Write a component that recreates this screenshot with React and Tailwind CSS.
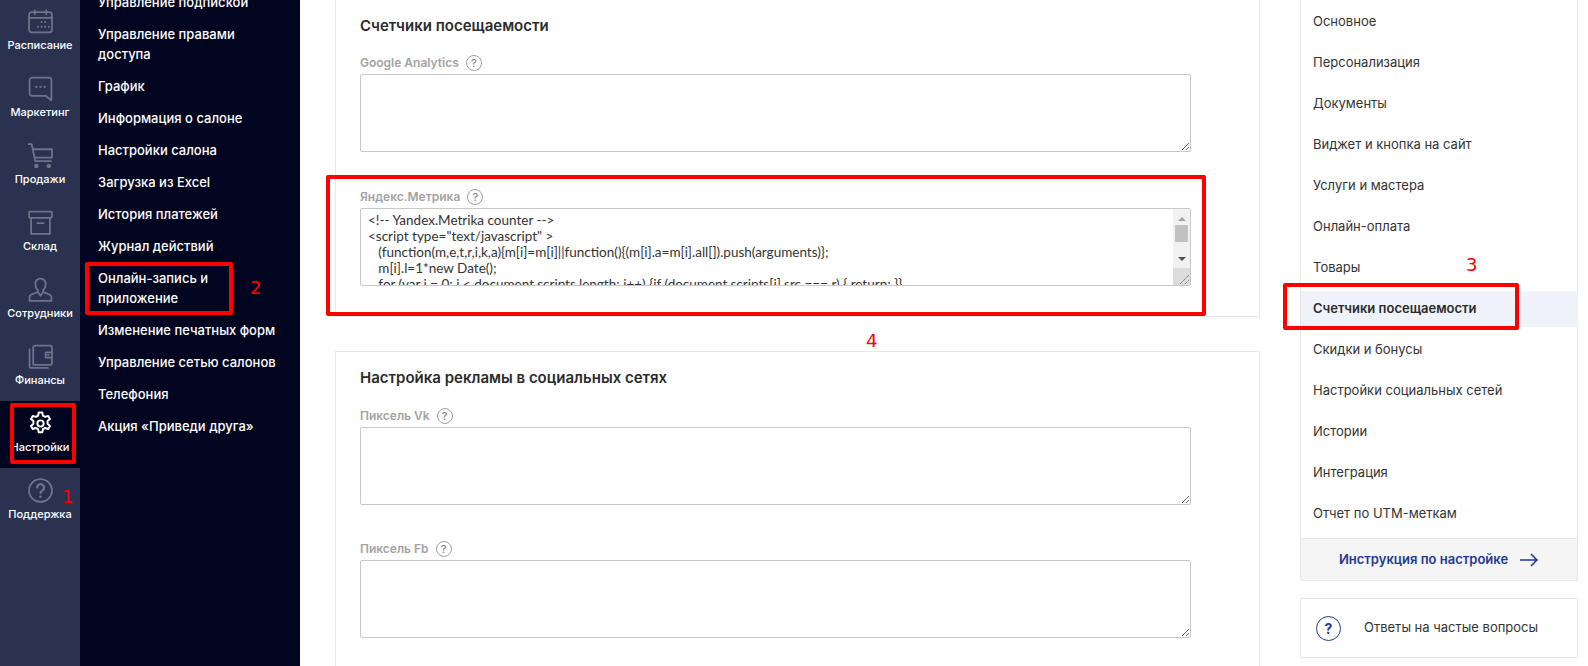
const railItems = [
  { label: "Расписание", icon: "calendar" },
  { label: "Маркетинг", icon: "chat" },
  { label: "Продажи", icon: "cart" },
  { label: "Склад", icon: "box" },
  { label: "Сотрудники", icon: "user" },
  { label: "Финансы", icon: "wallet" },
  { label: "Настройки", icon: "gear", active: true },
  { label: "Поддержка", icon: "help" },
];

const subItems = [
  "Управление подпиской",
  "Управление правами доступа",
  "График",
  "Информация о салоне",
  "Настройки салона",
  "Загрузка из Excel",
  "История платежей",
  "Журнал действий",
  "Онлайн-запись и приложение",
  "Изменение печатных форм",
  "Управление сетью салонов",
  "Телефония",
  "Акция «Приведи друга»",
];

const sideItems = [
  "Основное",
  "Персонализация",
  "Документы",
  "Виджет и кнопка на сайт",
  "Услуги и мастера",
  "Онлайн-оплата",
  "Товары",
  "Счетчики посещаемости",
  "Скидки и бонусы",
  "Настройки социальных сетей",
  "Истории",
  "Интеграция",
  "Отчет по UTM-меткам",
];

const metrika = `<!-- Yandex.Metrika counter -->
<script type="text/javascript" >
   (function(m,e,t,r,i,k,a){m[i]=m[i]||function(){(m[i].a=m[i].all[]).push(arguments)};
   m[i].l=1*new Date();
   for (var j = 0; j < document.scripts.length; j++) {if (document.scripts[j].src === r) { return; }}`;

function RailIcon({ name, active }) {
  const cls = active ? "text-white" : "text-[#6d7389]";
  const props = { width: 25, height: 25, viewBox: "0 0 24 24", fill: "none", stroke: "currentColor", strokeWidth: 1.7, strokeLinecap: "round", strokeLinejoin: "round", className: cls };
  if (name === "calendar")
    return (
      <svg {...props}>
        <rect x="1" y="3" width="22" height="19.500" rx="2.500" />
        <path d="M1 8.500h22M6.500 1v4M17.500 1v4" />
        <path d="M13 12.500h.01M16.500 12.500h.01M9.500 17h.01M13 17h.01M16.500 17h.01M20 17h.01" strokeWidth="2" />
      </svg>
    );
  if (name === "chat")
    return (
      <svg {...props}>
        <path d="M4 1.500h16a2.500 2.500 0 0 1 2.500 2.500V23.500l-5.500-4.500H4A2.500 2.500 0 0 1 1.500 16.500V4A2.500 2.500 0 0 1 4 1.500z" />
        <path d="M8 10.500h.01M12 10.500h.01M16 10.500h.01" strokeWidth="2.200" />
      </svg>
    );
  if (name === "cart")
    return (
      <svg {...props}>
        <path d="M0 1h3.500l3.500 16.500h15" />
        <path d="M4.800 6H23V14H6.500" />
        <circle cx="8" cy="22" r="1.300" fill="currentColor" />
        <circle cx="20" cy="22" r="1.300" fill="currentColor" />
      </svg>
    );
  if (name === "box")
    return (
      <svg {...props}>
        <rect x="1" y="1.500" width="22" height="6" rx="1" />
        <path d="M3 7.500v15.500h18V7.500M9 12.500h6" />
      </svg>
    );
  if (name === "user")
    return (
      <svg {...props}>
        <path d="M12 1.500c-3 0-5 2.400-5 5.300 0 2.400 1 4.500 2.500 6v1.500L3 17c-1 .5-1.500 1.300-1.500 2.500v3.500h21v-3.500c0-1.200-.5-2-1.500-2.500l-6.500-2.700v-1.500c1.500-1.500 2.500-3.600 2.500-6 0-2.900-2-5.300-5-5.300z" />
        <path d="M9.500 14.500L12 18l2.500-3.500" />
      </svg>
    );
  if (name === "wallet")
    return (
      <svg {...props}>
        <path d="M5 20V3.500A2 2 0 0 1 7 1.500h14a2 2 0 0 1 2 2V18a2 2 0 0 1-2 2H5z" />
        <path d="M1.500 5v16a2 2 0 0 0 2 2H19" />
        <path d="M23 8h-6v5h6" />
        <path d="M19.500 10.500h.01" strokeWidth="2" />
      </svg>
    );
  if (name === "gear")
    return (
      <svg {...props} strokeWidth="1.900">
        <path d="M10.300 1.500h3.400l.6 3 2.200 1.200 2.900-1 1.700 3-2.300 2v2.600l2.300 2-1.700 3-2.900-1-2.200 1.200-.6 3h-3.400l-.6-3-2.200-1.200-2.900 1-1.700-3 2.300-2v-2.600l-2.300-2 1.700-3 2.900 1 2.200-1.200z" />
        <circle cx="12" cy="12" r="3" />
      </svg>
    );
  return (
    <svg {...props}>
      <circle cx="12" cy="12" r="11" />
      <path d="M8.800 9.200a3.300 3.300 0 1 1 5 2.800c-1 .6-1.800 1.200-1.800 2.500" strokeWidth="2.200" />
      <path d="M12 18h.01" strokeWidth="2.600" />
    </svg>
  );
}

function Hint() {
  return (
    <span className="w-[16px] h-[16px] rounded-full border border-[#a0a0a0] text-[#8a8a8a] text-[11px] font-medium flex items-center justify-center">?</span>
  );
}

function Field({ label, value, className }) {
  return (
    <div className={className}>
      <div className="flex items-center gap-[7px] h-[19px] pt-[3px] mb-[3px] text-[12px] font-semibold text-[#a3a3a3]">
        {label} <Hint />
      </div>
      <div className="relative h-[78px] w-[831px]">
        <textarea
          readOnly
          defaultValue={value}
          className="block w-full h-full border border-[#c8c8c8] rounded-[2px] pl-[7px] pr-5 py-[3px] font-['Lato',sans-serif] text-[13.5px] leading-[16px] text-[#333] overflow-hidden whitespace-pre outline-none"
        />
        {value && (
          <div className="absolute right-px top-px bottom-px w-[17px] bg-[#f1f1f1] flex flex-col items-center">
            <div className="mt-[8px] w-0 h-0 border-x-[4px] border-x-transparent border-b-[4px] border-b-[#a3a3a3]" />
            <div className="mt-[4px] w-[13px] h-[17px] bg-[#c1c1c1]" />
            <div className="mt-[15px] w-0 h-0 border-x-[4px] border-x-transparent border-t-[4px] border-t-[#505050]" />
            <div className="mt-auto w-full h-[17px] bg-[#dcdcdc] flex items-end justify-end">
              <svg width="11" height="11" viewBox="0 0 11 11" fill="none" stroke="#555" strokeWidth="1" strokeDasharray="1 1"><path d="M1 10L10 1M6 10l4-4" /></svg>
            </div>
          </div>
        )}
      </div>
    </div>
  );
}

export default function App() {
  return (
    <div className="relative h-[666px] w-[1588px] overflow-hidden bg-white flex font-['Inter','Liberation_Sans',sans-serif]">
      {/* левая полоса */}
      <div className="w-[80px] shrink-0 bg-[#2a3250] -mt-px">
        {railItems.map((item) => (
          <div key={item.label} className={`h-[67px] flex flex-col items-center pt-[10px] ${item.active ? "bg-[#02051f]" : ""}`}>
            <RailIcon name={item.icon} active={item.active} />
            <span className="mt-[4px] text-[11px] leading-[14px] font-medium text-white">{item.label}</span>
          </div>
        ))}
      </div>

      {/* подменю */}
      <div className="w-[220px] shrink-0 bg-[#02051f] pl-[18px] pr-[20px] -mt-[14px]">
        {subItems.map((item) => (
          <div key={item} className="py-[6px] text-[13px] leading-[20px] font-medium text-white">{item}</div>
        ))}
      </div>

      {/* настройки */}
      <div className="w-[965px] shrink-0 pl-[35px]">
        <div className="w-[925px] h-[317px] border-x border-b border-[#e8e8e8] pl-6 pt-[17px]">
          <h2 className="text-[15px] leading-[18px] font-semibold text-[#2b2b2b] mb-[17px]">Счетчики посещаемости</h2>
          <Field label="Google Analytics" />
          <Field label="Яндекс.Метрика" value={metrika} className="mt-[34px]" />
        </div>
        <div className="w-[925px] mt-[34px] border border-[#e8e8e8] pl-6 pt-[17px] h-[400px]">
          <h2 className="text-[15px] leading-[18px] font-semibold text-[#2b2b2b] mb-[18px]">Настройка рекламы в социальных сетях</h2>
          <Field label="Пиксель Vk" />
          <Field label="Пиксель Fb" className="mt-[33px]" />
        </div>
      </div>

      {/* правая колонка */}
      <div className="w-[278px] ml-[35px] shrink-0">
        <div className="border-x border-b border-[#e8e8e8] rounded-b-[2px]">
          <div className="pt-px pb-[4px]">
            {sideItems.map((item) =>
              item === "Счетчики посещаемости" ? (
                <div key={item} className="h-[36px] mt-[3px] mb-[2px] -mr-px flex items-center pl-[12px] text-[13px] bg-[#eff2f9] font-semibold text-[#2b2b2b]">
                  {item}
                </div>
              ) : (
                <div key={item} className="h-[41px] flex items-center pl-[12px] text-[13px] text-[#333]">
                  {item}
                </div>
              )
            )}
          </div>
          <div className="h-[42px] bg-[#f5f5f5] border-t border-[#e8e8e8] flex items-center justify-center gap-[11px] text-[13px] font-semibold text-[#1d3a94]">
            Инструкция по настройке
            <svg width="20" height="14" viewBox="0 0 20 14" fill="none" stroke="currentColor" strokeWidth="1.500"><path d="M1 7h17M12 1l6 6-6 6" /></svg>
          </div>
        </div>
        <div className="mt-[17px] h-[60px] border border-[#e8e8e8] rounded-[2px] flex items-center pl-[15px] text-[13px] text-[#333]">
          <span className="w-[25px] h-[25px] rounded-full border-[1.500px] border-[#1d3a94] text-[#1d3a94] font-bold text-[14px] flex items-center justify-center">?</span>
          <span className="ml-[23px]">Ответы на частые вопросы</span>
        </div>
      </div>

      {/* пометки красным поверх скриншота */}
      <div className="absolute left-[10px] top-[403px] w-[66px] h-[61px] border-[4px] border-[#ff0000] rounded-[2px]" />
      <div className="absolute left-[85px] top-[262px] w-[148px] h-[53px] border-[4px] border-[#ff0000] rounded-[2px]" />
      <div className="absolute left-[326px] top-[175px] w-[880px] h-[141px] border-[4px] border-[#ff0000] rounded-[2px]" />
      <div className="absolute left-[1283px] top-[283px] w-[236px] h-[47px] border-[4px] border-[#ff0000] rounded-[2px]" />
      <span className="absolute left-[62px] top-[486px] text-[18px] leading-[22px] text-[#ff0000] font-['DejaVu_Sans',sans-serif]">1</span>
      <span className="absolute left-[250px] top-[277px] text-[18px] leading-[22px] text-[#ff0000] font-['DejaVu_Sans',sans-serif]">2</span>
      <span className="absolute left-[1466px] top-[254px] text-[18px] leading-[22px] text-[#ff0000] font-['DejaVu_Sans',sans-serif]">3</span>
      <span className="absolute left-[866px] top-[330px] text-[18px] leading-[22px] text-[#ff0000] font-['DejaVu_Sans',sans-serif]">4</span>
    </div>
  );
}
